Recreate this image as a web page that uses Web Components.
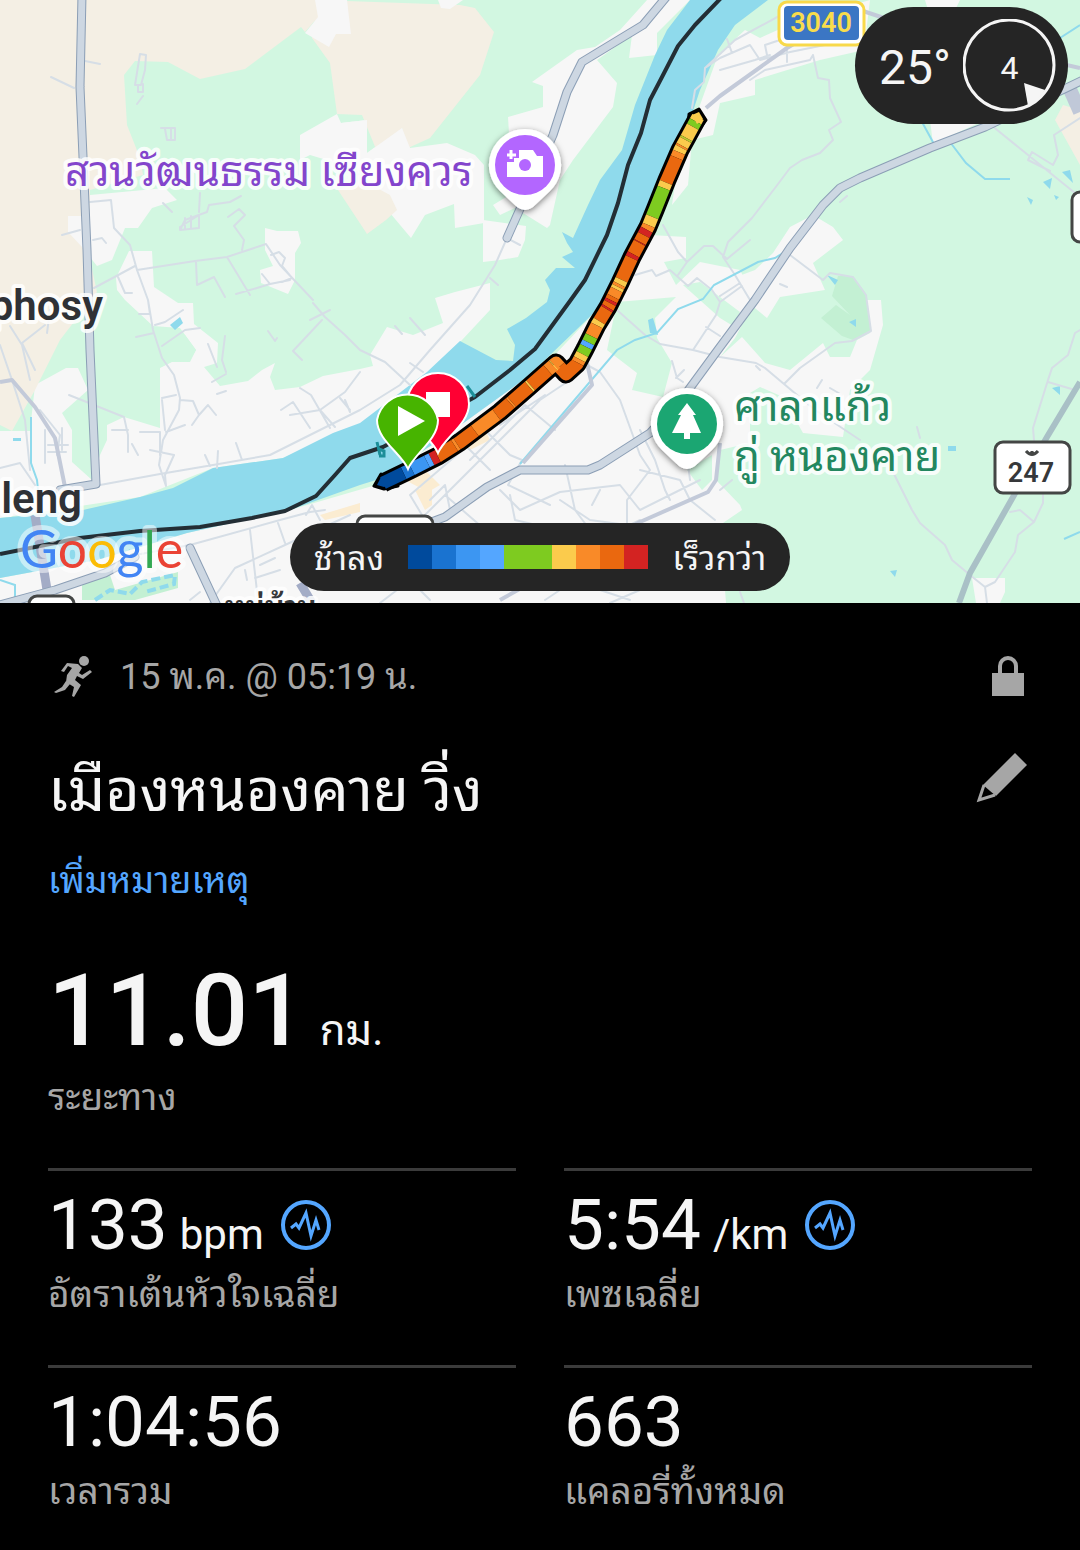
<!DOCTYPE html>
<html lang="th">
<head>
<meta charset="utf-8">
<meta name="viewport" content="width=device-width, initial-scale=1">
<title>เมืองหนองคาย วิ่ง</title>
<style>
	body{
		margin: 0;
		background: #000;
		color: #f5f5f5;
		font-family: Roboto, "Noto Sans Thai Looped", "Noto Looped Thai", Loma, Garuda, Waree, "Noto Sans Thai", sans-serif;
	}
</style>
</head>
<body>
<activity-page>
	<route-map slot="map">
		<weather-badge slot="top" temp="25°" wind="4"></weather-badge>
		<pace-legend slot="bottom" slower="ช้าลง" faster="เร็วกว่า"></pace-legend>
	</route-map>
	<activity-header date="15 พ.ค. @ 05:19 น." name="เมืองหนองคาย วิ่ง" note="เพิ่มหมายเหตุ"></activity-header>
	<activity-stat big value="11.01" unit="กม.">ระยะทาง</activity-stat>
	<activity-stat slot="grid" value="133" unit="bpm" chart>อัตราเต้นหัวใจเฉลี่ย</activity-stat>
	<activity-stat slot="grid" value="5:54" unit="/km" chart>เพซเฉลี่ย</activity-stat>
	<activity-stat slot="grid" value="1:04:56">เวลารวม</activity-stat>
	<activity-stat slot="grid" value="663">แคลอรี่ทั้งหมด</activity-stat>
</activity-page>

<script>
(function () {
	function AttachTemplate(elem, html){
		const template = document.createElement('template');
		template.innerHTML = html;
		elem.attachShadow({ mode: 'open' });
		elem.shadowRoot.appendChild(template.content.cloneNode(true));
	}

	class ActivityPage extends HTMLElement{
		constructor(){
			super()
			AttachTemplate(this, `
				<style>
					:host{ display: block; }
					main{
						display: flex;
						flex-direction: column;
						padding: 48px 48px 24px;
					}
					.grid{
						display: grid;
						grid-template-columns: 1fr 1fr;
						gap: 44px 48px;
						margin-top: 44px;
					}
				</style>
				<slot name="map"></slot>
				<main>
					<slot></slot>
					<div class="grid"><slot name="grid"></slot></div>
				</main>
			`);
		}
	}

	// pace colours along the track: [distance where it starts, colour]
	const pace = [
		[0, "#fbcb4c"], [5, "#7ecb20"], [11, "#fbcb4c"], [24, "#b9cb30"], [26, "#fbcb4c"], [33, "#f98a28"], [35, "#fbcb4c"],
		[40, "#f98a28"], [46, "#ea680f"], [73, "#fbcb4c"], [79, "#7ecb20"], [110, "#fbcb4c"], [119, "#f98a28"],
		[124, "#d32322"], [130, "#ea680f"], [138, "#d32322"], [139, "#ea680f"], [152, "#d32322"], [156, "#ea680f"],
		[180, "#fbcb4c"], [185, "#f98a28"], [188, "#fbcb4c"], [191, "#f98a28"], [199, "#ea680f"], [203, "#d32322"],
		[206, "#ea680f"], [211, "#d32322"], [213, "#ea680f"], [227, "#fbcb4c"], [232, "#f98a28"], [244, "#7ecb20"],
		[251, "#54a6ff"], [256, "#7ecb20"], [264, "#fbcb4c"], [270, "#f98a28"], [274, "#ea680f"], [300, "#f98a28"],
		[308, "#fbcb4c"], [309, "#f98a28"], [316, "#ea680f"], [339, "#fbcb4c"], [341, "#ea680f"], [364, "#f98a28"],
		[366, "#ea680f"], [384, "#f98a28"], [411, "#ea680f"], [433, "#f98a28"], [436, "#ea680f"], [456, "#d32322"],
		[463, "#54a6ff"], [468, "#3c96f2"], [485, "#1a73d0"], [494, "#004a9c"], [530, ""]
	];
	const track = "M698 117L680 150L667 180L655 210L648 227L632 257L620 283L608 307L597 325L585 349L577 364L566 374L556 363L530 386L500 412L460 442L438 456L410 470L383 483";

	function PaceLines(){
		var out = "";
		for(var i = 0;i < pace.length - 1;i++){
			var from = pace[i][0];
			var len = pace[i + 1][0] - from;
			out += `<path d="${track}" stroke="${pace[i][1]}" stroke-dasharray="0 ${from} ${len} 2000"/>`;
		}
		return out;
	}

	class RouteMap extends HTMLElement{
		constructor(){
			super()
			AttachTemplate(this, `
				<style>
					:host{
						display: block;
						position: relative;
						overflow: hidden;
					}
					svg{ display: block; width: 100%; height: auto; }
					.top{
						position: absolute;
						top: 7px;
						right: 12px;
					}
					.bottom{
						position: absolute;
						bottom: 12px;
						left: 0;
						right: 0;
						display: flex;
						justify-content: center;
					}
					.land{ fill: #f7f7f7; }
					.field{ fill: #f4efe4; }
					.park{ fill: #d2f7e1; }
					.water{ fill: #8fdaec; }
					.minor{ fill: none; stroke: #d6dee6; stroke-width: 2; stroke-linejoin: round; stroke-linecap: round; }
					.stream{ fill: none; stroke: #8fdaec; stroke-width: 2; }
					.edge{ fill: none; stroke: #8b9eb5; stroke-width: 9; stroke-linejoin: round; stroke-linecap: round; }
					.road{ fill: none; stroke: #cdd7e2; stroke-width: 7; stroke-linejoin: round; stroke-linecap: round; }
					.trunk{ fill: none; stroke: #c3cad9; stroke-width: 4; stroke-linejoin: round; }
					.halo{ paint-order: stroke; stroke: #fff; stroke-opacity: .85; stroke-width: 8; stroke-linejoin: round; }
					.place{ font-size: 42px; }
					.town{ font-size: 42px; font-weight: 600; fill: #2f3136; }
					.shield{ font-size: 27px; font-weight: 600; text-anchor: middle; }
				</style>
				<svg viewBox="0 0 1080 603" role="img" aria-label="Map">
					<defs>
						<filter id="shadow" x="-30%" y="-30%" width="160%" height="160%">
							<feDropShadow dx="0" dy="2" stdDeviation="3" flood-opacity=".5"/>
						</filter>
					</defs>
					<rect class="park" width="1080" height="603"/>
					<g class="land">
						<path d="M0 431L30 431L35 385L66 368H78L88 390L62 413L72 430V462L92 480L100 455L107 440V425L124 417L160 428V368L172 362H190L196 350L180 328L153 326L125 300L117 290L116 278L129 251H152L154 287L178 303H193L194 324L218 343L217 363L204 367L220 386L248 381L262 370L275 363L270 377L275 390L300 387L323 376L360 369L373 366L370 355L387 327L413 335L443 323L435 298L455 292L490 283V310L462 340L430 372L360 424L283 458L213 468L140 497L0 518Z"/>
						<path d="M0 578L97 560L187 533L290 510L376 485L548 362L600 307L650 235L686 237V258L664 262L676 285L700 262L740 270L755 300L735 338L720 357L742 337L765 363L790 370L823 343L830 357H850L857 340L870 333L864 300H881L883 325L870 370L850 390L843 437L803 433L783 397L760 387L750 393V443L720 450L716 480L740 505L742 510L720 525L726 603H0Z"/>
						<path d="M720 283L755 270L773 253L790 227L813 215L833 227L843 240L813 263L825 290L780 297L767 318L745 300L720 320Z"/>
						<path d="M718 55L745 30L760 38L800 20L870 0L864 50L820 60L755 80V95L720 103L713 135L692 140L688 185L672 205L680 150L700 105Z"/>
						<path d="M647 0L620 30L595 47L577 50L532 82L543 86V107L508 117L510 150L560 165L493 205L500 215L515 208L547 228L550 225L560 180L573 160L613 107L617 83L597 60L632 35L629 58L657 55V33L690 0Z"/>
						<path d="M483 220L526 226L525 240L518 257L500 260L483 262Z"/>
						<path d="M300 135L337 114L341 123L367 120V153L402 128L410 148L447 143L475 155L484 165V223L455 228L454 204L425 215L411 238L390 213L360 170L310 155L300 160Z"/>
						<path d="M265 228L277 231H298L301 243L295 253V280L288 294L261 283L260 270L273 266L265 250Z"/>
						<path d="M925 0H960L955 10H928ZM930 120H985L933 144ZM972 578H1005V592L1000 603H976Z"/>
					</g>
					<g class="field">
						<path d="M0 0H318L318 17L305 32L301 27L245 69L200 79L168 62L135 61L124 75L127 125L140 158L143 175L90 190V260L97 292L60 340L35 390L12 431L0 425Z"/>
						<path d="M318 0L460 5L475 8L494 32L480 75L430 138L408 148L402 128L378 154L362 115L337 114L330 63L312 38ZM338 190L362 180L390 195L397 210L386 220L367 234Z"/>
						<path d="M1063 105L1080 110V165L1055 120Z"/>
					</g>
					<g class="land">
						<path d="M315 0H347L351 34H336L329 47L305 33L318 17ZM438 0H463L450 9L441 8Z"/>
						<path d="M90 195L165 188L177 200L152 208L138 228H125L112 260L97 266L82 247L68 232V216H90Z"/>
						<path d="M367 120V153L402 128L410 148L390 180L355 160L341 123Z"/>
					</g>
					<path class="park" d="M617 302L676 297L655 318L657 338L672 363L663 397L632 390L637 373L607 350ZM683 285L700 282L740 312L733 326L720 318ZM150 327L185 335L196 350L188 362L172 360L160 350ZM687 470L712 455V480L702 490Z"/>
					<path fill="#c3f0d3" d="M821 318L836 305L850 315L832 296L838 276H853L866 294L871 330L853 340L842 336Z"/>
					<path fill="#fbecd1" d="M405 480L425 470L440 485L428 492ZM320 515L360 503V512L325 520ZM415 490L432 485V505L425 510ZM465 440L485 430L490 440L470 450Z"/>

					<path class="water" d="M690 0L667 30L655 55L635 105L622 150L600 180L588 205L573 238L562 232L567 243L573 252L562 257L575 268H556L545 280L550 290L547 302L526 318L507 329L515 345L513 361L496 360L460 341L427 372L360 423L333 433L283 458L213 468L173 488L140 497L83 510L0 518V578L97 560L187 533L290 510L360 485L376 480L440 440L530 375L548 357L600 307L640 235L670 180L690 120L700 90L718 50L735 25L768 0Z"/>
					<path class="water" d="M170 325L180 317L183 323L175 330ZM13 438H21V441H13ZM648 320L653 318L658 335L650 333ZM1043 182L1052 178L1050 189ZM1062 172L1070 170L1073 183ZM849 322L856 319V327ZM827 275L838 280L835 285ZM1052 388L1060 386V395ZM948 446H956V451H948ZM890 571L897 570L895 577ZM1027 197L1033 200L1031 205ZM1054 195L1059 197L1056 200Z"/>
					<path fill="#c3f0d3" d="M82 585L110 575L115 590L178 572V588L135 600H82Z"/>
					<path fill="none" stroke="#8fdaec" stroke-width="4" stroke-dasharray="9 4" d="M95 600L110 590L130 594L142 582L175 575L174 584L145 592"/>

					<g class="minor">
						<path d="M51 77L74 88M85 61L100 64M140 54L146 55L145 70L141 85H135L140 54M138 85V92H143V84M143 96L137 104M161 128H175V140H167L165 129M171 128V139M90 202L111 200L114 228L130 245L137 270L148 300M137 270L195 261L227 257L266 244L280 265L313 300M94 288L135 266M118 277L125 293H132M62 235L80 230M93 240L102 238L106 243M196 262L197 285L214 277L225 297M227 257L250 295M163 203L172 212M180 230L185 220L207 212L209 205L230 202L241 196M200 193L199 212M180 230V227L199 215V228ZM185 218V229M191 216V229M228 217L239 209L245 215L234 226L244 240L242 250M271 255L279 252L285 258L282 266L292 278L282 282M262 274L270 284L290 280M236 294L257 288L270 284M148 300L153 330L162 358L174 375L180 398L179 410L163 440L159 465L166 486L165 475L174 455L150 450M180 400L193 401L199 415L192 425M69 395L124 417L128 435V452M162 346L185 330L200 328M136 337L154 333M139 314H150L148 300M155 325L165 322L183 310M112 430H128M162 398L176 395M162 400L165 430M166 432L185 425M199 415L208 405L216 415M212 382L226 374M217 394L226 391M281 410L293 402L310 428M290 415L320 410L335 427M300 388L311 395L330 428M320 410L345 392L360 372M340 398L350 410M345 400L350 412"/>
						<path d="M100 485L160 474L213 465L270 455L310 435L360 410L400 385L430 350L470 305L495 265L507 238L520 245M490 278L498 285M205 455L210 466M218 451L217 468M236 443L242 460M140 432H160V455M132 444L138 455M313 303L325 317L345 335L360 350L385 362L410 385M310 320L330 310M322 320L293 351L302 360M268 331L275 341L277 338M225 336L222 360L226 372M208 344L217 367M395 326L402 334M410 318L425 335M410 363L423 372"/>
						<path d="M0 468L20 463L35 485M0 345L12 380L25 420L30 470M10 326L22 345L30 380M45 325L22 343L35 370M50 310L47 333M40 410L60 435L57 455M45 430V463M48 445H68M62 428V450M48 452H66"/>
						<path d="M135 555L190 545L280 520L310 512L325 510M210 603L235 568L285 545L350 515M250 530L258 600M255 578L280 570M278 523L285 543M260 565L275 558M245 570L247 580M306 515L312 505L320 520M190 600L200 592"/>
						<path d="M420 520L540 400L570 380M440 545L410 495L480 435M470 460L525 405L555 430M480 425L510 455L522 460L508 485L550 505M445 495L520 560M500 425L545 395M430 500L445 485L450 510M465 445L490 470M500 490L510 500L520 510L560 492L620 485L640 510L700 480M565 465L575 510L590 530M510 495L515 520L600 540L640 520M600 490L592 505M560 500L590 520L627 525V500L650 470L640 455L620 400L600 372L587 365M640 430L655 460L665 490L670 500M640 470L680 480L690 500L715 520M690 480L685 440M672 361L677 378L683 382M676 378L684 370"/>
						<path d="M692 108L695 90L704 82L705 68L720 58L750 45L760 60L790 52L860 38M705 68L735 40L790 10M727 39L732 53M720 70L755 60L770 55M768 60L765 45L780 40M787 45L787 62M750 80L765 70L810 60L813 55M813 55L818 78L829 80L830 98L841 122L829 130L833 140L820 153L802 160L790 168L775 188L752 218L728 242L723 257L735 275L750 300M790 255L823 280L830 273L853 277L866 295L871 331L852 341L835 343L800 368L784 384L765 368L756 363L720 357M784 384L815 410L860 440M756 366L760 370M817 388L822 380M830 388L842 395M780 284L787 287M720 296L740 283M840 202L847 196M991 125L1075 193M1054 135L1058 155L1053 165L1032 152L1028 160L1050 171M1054 135L1080 118M663 225L678 252L687 262L704 246H713L727 259L750 240M687 262L678 275M635 275L652 270L656 276L670 270L688 286L697 278L712 290L720 302L716 315L693 350M720 302L742 286M723 257L735 275M617 310L645 335L660 344L693 350L720 357M706 327L720 336M893 472L912 510L920 523L945 545L952 560L970 575L985 587L987 603M985 587L995 582L1015 552L1018 535L1034 522L1043 503V495M1034 522L1020 510L1010 512M1034 440L1033 428L1048 380L1052 368L1068 355L1075 333L1080 330M1048 382L1075 390M917 427L920 438M720 490L732 480"/>
						<path d="M380 603L410 580L430 600M400 590L450 580M545 600L560 590M600 590L630 600M740 592L744 603M610 603L640 590"/>
					</g>
					<path class="stream" d="M31 417V463L37 480L39 500M520 464L617 350L635 340L657 333L678 309L703 299L714 285L758 262L775 258L783 253M922 122L934 144M950 142L966 163L985 179H1010M1060 38L1080 25M1064 539L1080 532M0 580L15 585V597L5 603"/>

					<path class="trunk" d="M706 108L720 96L787 48L860 5M1045 60L1080 68M0 382L12 380L35 407L55 438L65 487M523 463L592 385L587 363M860 10L890 20M720 443L716 480L708 492L640 522L500 600"/>
					<path stroke="#a3acc6" stroke-width="9" fill="none" d="M35 515L48 596M300 583L312 603"/>
					<path stroke="#a9c0c6" stroke-width="6" fill="none" d="M1080 382L1047 437L970 573L959 603"/>
					<path stroke="#c0c8d8" stroke-width="14" fill="none" d="M1068 85L1080 112"/>
					<g class="edge">
						<path d="M82 -5L80 87L87 250L90 350L96 484L60 490"/>
						<path d="M668 -5L643 25L582 62L567 92L553 135L507 238"/>
						<path d="M1085 79L985 127L930 148L860 178L840 188L823 205L790 248L755 300L720 347L687 392L650 433L600 465L588 470H520L487 487L445 517L410 530"/>
						<path d="M190 548L218 608M135 557L105 573L55 590L0 605"/>
					</g>
					<g class="road">
						<path d="M82 -5L80 87L87 250L90 350L96 484L60 490"/>
						<path d="M668 -5L643 25L582 62L567 92L553 135L507 238"/>
						<path d="M1085 79L985 127L930 148L860 178L840 188L823 205L790 248L755 300L720 347L687 392L650 433L600 465L588 470H520L487 487L445 517L410 530"/>
						<path d="M190 548L218 608M135 557L105 573L55 590L0 605"/>
					</g>
					<path fill="none" stroke="#232e35" stroke-width="4" stroke-linejoin="round" d="M722 -3L695 25L678 46L662 77L650 100L641 133L628 165L618 203L607 235L585 280L570 301L535 349L510 370L475 397L383 447L350 458L335 475L316 496L285 511L252 518L200 527L140 531L80 538L0 554"/>
					<path fill="none" stroke="#1c8f99" stroke-width="3" d="M377 442L380 455M379 449L384 451V456H379M467 386L475 397"/>

					<g fill="none" stroke-linejoin="round">
						<path stroke="#000" fill="#000" stroke-width="3" d="M689 114L699 109L706 120L700 128H688ZM381 474L374 486L384 489L398 486Z"/>
						<path stroke="#000" stroke-width="19" d="${track}"/>
						<g stroke-width="13">${PaceLines()}</g>
						<path fill="#fbcb4c" d="M692 115L699 112L703 119L697 124Z"/>
						<path fill="#004a9c" d="M386 476L381 477L377 485L384 487L392 484Z"/>
					</g>

					<g stroke="#fff" stroke-width="2">
						<path fill="#ff0033" d="M438 453C432 438 407 424 407 404A31 31 0 0 1 469 404C469 424 444 438 438 453Z"/>
						<path fill="#fff" d="M427 393H449V416H427Z"/>
						<path fill="#47b400" d="M408 469C402 454 377 440 377 420A31 31 0 0 1 438 420C438 440 414 454 408 469Z"/>
						<path fill="#fff" stroke="none" d="M398 406L425 421L398 436Z"/>
					</g>

					<path filter="url(#shadow)" fill="#fff" d="M525 129A36 36 0 0 1 550 191L533 207Q525 213 517 207L500 191A36 36 0 0 1 525 129Z"/>
					<circle cx="525" cy="165" r="30" fill="#b366ff"/>
					<path fill="#fff" d="M519 150H533L537 156H543V177H507V162H514V158H519Z"/>
					<path stroke="#fff" stroke-width="3" d="M507 155H516M511 150V159"/>
					<circle cx="525" cy="165" r="6" fill="#b366ff"/>
					<path filter="url(#shadow)" fill="#fff" d="M687 388A36 36 0 0 1 712 450L695 466Q687 472 679 466L662 450A36 36 0 0 1 687 388Z"/>
					<circle cx="687" cy="424" r="30" fill="#1ba672"/>
					<path fill="#fff" d="M687 403L696 415H693L701 433H690V439H684V433H672L681 415H678Z"/>

					<text class="place halo" x="65" y="186" fill="#8345cc">สวนวัฒนธรรม เซียงควร</text>
					<text class="place halo" x="734" y="421" fill="#23875f">ศาลาแก้ว</text>
					<text class="place halo" x="734" y="471" fill="#23875f">กู่ หนองคาย</text>
					<text class="town halo" x="103" y="320" text-anchor="end">phosy</text>
					<text class="town halo" x="82" y="513" text-anchor="end">leng</text>

					<rect x="779" y="2" width="85" height="43" rx="8" fill="#fff" stroke="#f8d94a" stroke-width="3"/>
					<rect x="784" y="6" width="75" height="34" rx="4" fill="#3b76c4"/>
					<text class="shield" x="821" y="32" fill="#f8dc4c">3040</text>
					<g fill="#fff" stroke="#444645" stroke-width="3">
						<rect x="995" y="442" width="75" height="51" rx="8"/>
						<rect x="1072" y="192" width="40" height="50" rx="8"/>
						<rect x="357" y="516" width="76" height="50" rx="8"/>
						<rect x="29" y="596" width="45" height="40" rx="8"/>
					</g>
					<path fill="none" stroke="#444645" stroke-width="3" d="M1026 451Q1032 458 1038 451M1032 451V455"/>
					<text class="shield" x="1031" y="482" fill="#36383a">247</text>
					<text class="halo" x="225" y="617" font-size="30" font-weight="600" fill="#36383a">หมู่บ้าน</text>

					<text x="20" y="568" font-size="52" style="font-family: Lato, sans-serif; stroke-opacity: .5; stroke-width: 10px" class="halo"><tspan fill="#4285f4">G</tspan><tspan fill="#ea4335">o</tspan><tspan fill="#fbbc05">o</tspan><tspan fill="#4285f4">g</tspan><tspan fill="#34a853">l</tspan><tspan fill="#ea4335">e</tspan></text>
				</svg>
				<div class="top"><slot name="top"></slot></div>
				<div class="bottom"><slot name="bottom"></slot></div>
			`);
		}
	}

	class WeatherBadge extends HTMLElement{
		constructor(){
			super()
			AttachTemplate(this, `
				<style>
					:host{
						display: flex;
						align-items: center;
						gap: 12px;
						padding: 12px 12px 12px 24px;
						border-radius: 60px;
						background: #252525;
						color: #f5f5f5;
						font-size: 48px;
						line-height: 1;
					}
					.wind{
						display: grid;
						place-items: center;
						width: 93px;
						height: 93px;
						font-size: 32px;
					}
					.wind > *{ grid-area: 1 / 1; }
					.temp, .speed{ padding-top: 4px; }
				</style>
				<span class="temp"></span>
				<div class="wind">
					<svg width="93" height="93" viewBox="0 0 93 93" aria-hidden="true">
						<circle cx="46" cy="46" r="45" fill="none" stroke="#f5f5f5" stroke-width="3"/>
						<path fill="#f5f5f5" d="M61 64L82 71Q75 82 65 87Z"/>
					</svg>
					<span class="speed"></span>
				</div>
			`);
		}
		connectedCallback(){
			this.shadowRoot.querySelector(".temp").textContent = this.getAttribute("temp");
			this.shadowRoot.querySelector(".speed").textContent = this.getAttribute("wind");
		}
	}

	class PaceLegend extends HTMLElement{
		constructor(){
			super()
			AttachTemplate(this, `
				<style>
					:host{
						display: flex;
						align-items: center;
						gap: 24px;
						height: 68px;
						padding: 0 24px;
						border-radius: 34px;
						background: #252525;
						color: #f5f5f5;
						font-size: 34px;
						white-space: nowrap;
					}
					span{ padding-bottom: 6px; }
					.scale{ display: flex; }
					.scale i{ width: 24px; height: 24px; }
				</style>
				<span class="slower"></span>
				<div class="scale"></div>
				<span class="faster"></span>
			`);
			var colors = ["#004a9c", "#1a73d0", "#3c96f2", "#54a6ff", "#7ecb20", "#7ecb20", "#fbcb4c", "#f98a28", "#ea680f", "#d32322"];
			for(var i = 0;i < colors.length;i++){
				var step = document.createElement("i");
				step.style.background = colors[i];
				this.shadowRoot.querySelector(".scale").appendChild(step);
			}
		}
		connectedCallback(){
			this.shadowRoot.querySelector(".slower").textContent = this.getAttribute("slower");
			this.shadowRoot.querySelector(".faster").textContent = this.getAttribute("faster");
		}
	}

	class ActivityHeader extends HTMLElement{
		constructor(){
			super()
			AttachTemplate(this, `
				<style>
					:host{ display: block; }
					.row{
						display: flex;
						align-items: center;
						justify-content: space-between;
					}
					.meta{
						display: flex;
						align-items: center;
						gap: 24px;
						color: #a6a6a6;
						font-size: 36px;
						line-height: 52px;
					}
					h1{
						margin: 0;
						font-size: 59px;
						font-weight: 400;
						line-height: 88px;
					}
					.title{
						align-items: flex-start;
						margin-top: 44px;
					}
					button{
						display: block;
						padding: 0;
						border: 0;
						background: none;
						color: #a6a6a6;
						font: inherit;
						cursor: pointer;
					}
					svg{ display: block; }
					.note{
						margin-top: 20px;
						color: #54a6ff;
						font-size: 36px;
						line-height: 52px;
					}
				</style>
				<div class="row">
					<div class="meta">
						<svg width="48" height="48" viewBox="0 0 48 48" fill="currentColor" aria-hidden="true">
							<circle cx="36" cy="8" r="5"/>
							<path d="M19 10L30 11L34 15L31 20L34 22L42 17L44 19L35 26L29 23L27 27L33 32L26 44L24 43L26 34L18 29L19 22L24 15L20 13L16 19L13 18Z"/>
							<path d="M18 28L22 31L17 37L8 40L6 39L14 34Z"/>
						</svg>
						<span class="date"></span>
					</div>
					<button type="button" aria-label="Privacy">
						<svg width="48" height="48" viewBox="0 0 48 48" aria-hidden="true">
							<path fill="currentColor" d="M8 20H40V43H8Z"/>
							<path fill="none" stroke="currentColor" stroke-width="4" d="M16 21V13A8 8 0 0 1 32 13V21"/>
						</svg>
					</button>
				</div>
				<div class="row title">
					<h1></h1>
					<button type="button" aria-label="Edit">
						<svg width="60" height="60" viewBox="0 0 60 60" aria-hidden="true">
							<path fill="currentColor" d="M43 6L55 18L24 49L11 38Z"/>
							<path fill="none" stroke="currentColor" stroke-width="3" d="M12 38L7 53L23 48"/>
						</svg>
					</button>
				</div>
				<button type="button" class="note"></button>
			`);
		}
		connectedCallback(){
			this.shadowRoot.querySelector(".date").textContent = this.getAttribute("date");
			this.shadowRoot.querySelector("h1").textContent = this.getAttribute("name");
			this.shadowRoot.querySelector(".note").textContent = this.getAttribute("note");
		}
	}

	class ActivityStat extends HTMLElement{
		constructor(){
			super()
			AttachTemplate(this, `
				<style>
					:host{
						display: block;
						padding-top: 14px;
						border-top: 3px solid #3b3b3b;
					}
					:host([big]){
						margin-top: 32px;
						border-top: 0;
					}
					.line{
						display: flex;
						align-items: baseline;
						gap: 12px;
						height: 80px;
						line-height: 80px;
					}
					.value{ font-size: 71px; }
					.unit{ font-size: 42px; line-height: 1; }
					button{
						align-self: center;
						margin-left: 4px;
						padding: 0;
						border: 0;
						background: none;
						color: #54a6ff;
						cursor: pointer;
					}
					button svg{ display: block; }
					.label{
						padding-top: 4px;
						color: #a6a6a6;
						font-size: 37px;
						line-height: 52px;
					}
					:host([big]) .line{ gap: 14px; height: 115px; line-height: 115px; }
					:host([big]) .value{ font-size: 101px; font-weight: 500; }
					:host([big]) .unit{ font-size: 42px; line-height: 1; }
					[hidden]{ display: none; }
				</style>
				<div class="line">
					<span class="value"></span>
					<span class="unit"></span>
					<button type="button" aria-label="Chart">
						<svg width="52" height="52" viewBox="0 0 52 52" fill="none" stroke="currentColor" stroke-width="3" aria-hidden="true">
							<circle cx="26" cy="26" r="23" stroke-width="4"/>
							<path d="M11 29L16 25L19 29L26 14L31 37L36 21L39 31"/>
						</svg>
					</button>
				</div>
				<div class="label"><slot></slot></div>
			`);
		}
		connectedCallback(){
			this.shadowRoot.querySelector(".value").textContent = this.getAttribute("value");
			this.shadowRoot.querySelector(".unit").textContent = this.getAttribute("unit");
			this.shadowRoot.querySelector(".unit").hidden = !this.hasAttribute("unit");
			this.shadowRoot.querySelector("button").hidden = !this.hasAttribute("chart");
		}
	}

	window.customElements.define('activity-page', ActivityPage);
	window.customElements.define('route-map', RouteMap);
	window.customElements.define('weather-badge', WeatherBadge);
	window.customElements.define('pace-legend', PaceLegend);
	window.customElements.define('activity-header', ActivityHeader);
	window.customElements.define('activity-stat', ActivityStat);
}
)();
</script>
</body>
</html>
